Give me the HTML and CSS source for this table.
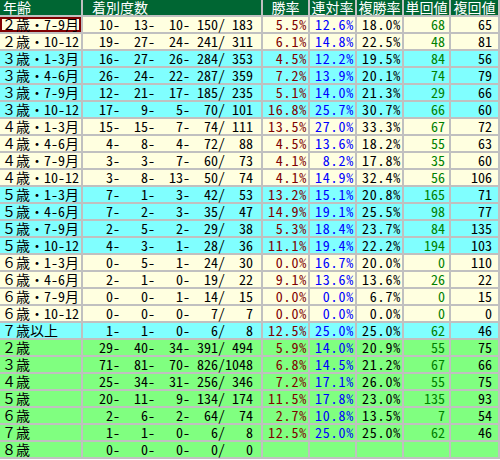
FILE: index.html
```html
<!DOCTYPE html>
<html lang="ja">
<head>
<meta charset="utf-8">
<title>年齢別成績</title>
<link rel="stylesheet" href="styles.css">
</head>
<body>
<div class="tbl">
  <div class="row head">
    <div class="lbl">年齢</div><div class="rec">着別度数</div><div>勝率</div><div>連対率</div><div>複勝率</div><div>単回値</div><div>複回値</div>
  </div>
  <div class="row y">
    <div class="lbl sel">２歳・7-9月</div><div class="rec"><span>10-</span><span>13-</span><span>10-</span><span>150/</span><span class="t">183</span></div><div class="w">5.5%</div><div class="r">12.6%</div><div class="p">18.0%</div><div class="tn">68</div><div class="fk">65</div>
  </div>
  <div class="row y">
    <div class="lbl">２歳・10-12</div><div class="rec"><span>19-</span><span>27-</span><span>24-</span><span>241/</span><span class="t">311</span></div><div class="w">6.1%</div><div class="r">14.8%</div><div class="p">22.5%</div><div class="tn">48</div><div class="fk">81</div>
  </div>
  <div class="row c">
    <div class="lbl">３歳・1-3月</div><div class="rec"><span>16-</span><span>27-</span><span>26-</span><span>284/</span><span class="t">353</span></div><div class="w">4.5%</div><div class="r">12.2%</div><div class="p">19.5%</div><div class="tn">84</div><div class="fk">56</div>
  </div>
  <div class="row c">
    <div class="lbl">３歳・4-6月</div><div class="rec"><span>26-</span><span>24-</span><span>22-</span><span>287/</span><span class="t">359</span></div><div class="w">7.2%</div><div class="r">13.9%</div><div class="p">20.1%</div><div class="tn">74</div><div class="fk">79</div>
  </div>
  <div class="row c">
    <div class="lbl">３歳・7-9月</div><div class="rec"><span>12-</span><span>21-</span><span>17-</span><span>185/</span><span class="t">235</span></div><div class="w">5.1%</div><div class="r">14.0%</div><div class="p">21.3%</div><div class="tn">29</div><div class="fk">66</div>
  </div>
  <div class="row c">
    <div class="lbl">３歳・10-12</div><div class="rec"><span>17-</span><span>9-</span><span>5-</span><span>70/</span><span class="t">101</span></div><div class="w">16.8%</div><div class="r">25.7%</div><div class="p">30.7%</div><div class="tn">66</div><div class="fk">60</div>
  </div>
  <div class="row y">
    <div class="lbl">４歳・1-3月</div><div class="rec"><span>15-</span><span>15-</span><span>7-</span><span>74/</span><span class="t">111</span></div><div class="w">13.5%</div><div class="r">27.0%</div><div class="p">33.3%</div><div class="tn">67</div><div class="fk">72</div>
  </div>
  <div class="row y">
    <div class="lbl">４歳・4-6月</div><div class="rec"><span>4-</span><span>8-</span><span>4-</span><span>72/</span><span class="t">88</span></div><div class="w">4.5%</div><div class="r">13.6%</div><div class="p">18.2%</div><div class="tn">55</div><div class="fk">63</div>
  </div>
  <div class="row y">
    <div class="lbl">４歳・7-9月</div><div class="rec"><span>3-</span><span>3-</span><span>7-</span><span>60/</span><span class="t">73</span></div><div class="w">4.1%</div><div class="r">8.2%</div><div class="p">17.8%</div><div class="tn">35</div><div class="fk">60</div>
  </div>
  <div class="row y">
    <div class="lbl">４歳・10-12</div><div class="rec"><span>3-</span><span>8-</span><span>13-</span><span>50/</span><span class="t">74</span></div><div class="w">4.1%</div><div class="r">14.9%</div><div class="p">32.4%</div><div class="tn">56</div><div class="fk">106</div>
  </div>
  <div class="row c">
    <div class="lbl">５歳・1-3月</div><div class="rec"><span>7-</span><span>1-</span><span>3-</span><span>42/</span><span class="t">53</span></div><div class="w">13.2%</div><div class="r">15.1%</div><div class="p">20.8%</div><div class="tn">165</div><div class="fk">71</div>
  </div>
  <div class="row c">
    <div class="lbl">５歳・4-6月</div><div class="rec"><span>7-</span><span>2-</span><span>3-</span><span>35/</span><span class="t">47</span></div><div class="w">14.9%</div><div class="r">19.1%</div><div class="p">25.5%</div><div class="tn">98</div><div class="fk">77</div>
  </div>
  <div class="row c">
    <div class="lbl">５歳・7-9月</div><div class="rec"><span>2-</span><span>5-</span><span>2-</span><span>29/</span><span class="t">38</span></div><div class="w">5.3%</div><div class="r">18.4%</div><div class="p">23.7%</div><div class="tn">84</div><div class="fk">135</div>
  </div>
  <div class="row c">
    <div class="lbl">５歳・10-12</div><div class="rec"><span>4-</span><span>3-</span><span>1-</span><span>28/</span><span class="t">36</span></div><div class="w">11.1%</div><div class="r">19.4%</div><div class="p">22.2%</div><div class="tn">194</div><div class="fk">103</div>
  </div>
  <div class="row y">
    <div class="lbl">６歳・1-3月</div><div class="rec"><span>0-</span><span>5-</span><span>1-</span><span>24/</span><span class="t">30</span></div><div class="w">0.0%</div><div class="r">16.7%</div><div class="p">20.0%</div><div class="tn">0</div><div class="fk">110</div>
  </div>
  <div class="row y">
    <div class="lbl">６歳・4-6月</div><div class="rec"><span>2-</span><span>1-</span><span>0-</span><span>19/</span><span class="t">22</span></div><div class="w">9.1%</div><div class="r">13.6%</div><div class="p">13.6%</div><div class="tn">26</div><div class="fk">22</div>
  </div>
  <div class="row y">
    <div class="lbl">６歳・7-9月</div><div class="rec"><span>0-</span><span>0-</span><span>1-</span><span>14/</span><span class="t">15</span></div><div class="w">0.0%</div><div class="r">0.0%</div><div class="p">6.7%</div><div class="tn">0</div><div class="fk">15</div>
  </div>
  <div class="row y">
    <div class="lbl">６歳・10-12</div><div class="rec"><span>0-</span><span>0-</span><span>0-</span><span>7/</span><span class="t">7</span></div><div class="w">0.0%</div><div class="r">0.0%</div><div class="p">0.0%</div><div class="tn">0</div><div class="fk">0</div>
  </div>
  <div class="row c">
    <div class="lbl">７歳以上</div><div class="rec"><span>1-</span><span>1-</span><span>0-</span><span>6/</span><span class="t">8</span></div><div class="w">12.5%</div><div class="r">25.0%</div><div class="p">25.0%</div><div class="tn">62</div><div class="fk">46</div>
  </div>
  <div class="row g">
    <div class="lbl">２歳</div><div class="rec"><span>29-</span><span>40-</span><span>34-</span><span>391/</span><span class="t">494</span></div><div class="w">5.9%</div><div class="r">14.0%</div><div class="p">20.9%</div><div class="tn">55</div><div class="fk">75</div>
  </div>
  <div class="row g">
    <div class="lbl">３歳</div><div class="rec"><span>71-</span><span>81-</span><span>70-</span><span>826/</span><span class="t">1048</span></div><div class="w">6.8%</div><div class="r">14.5%</div><div class="p">21.2%</div><div class="tn">67</div><div class="fk">66</div>
  </div>
  <div class="row g">
    <div class="lbl">４歳</div><div class="rec"><span>25-</span><span>34-</span><span>31-</span><span>256/</span><span class="t">346</span></div><div class="w">7.2%</div><div class="r">17.1%</div><div class="p">26.0%</div><div class="tn">55</div><div class="fk">75</div>
  </div>
  <div class="row g">
    <div class="lbl">５歳</div><div class="rec"><span>20-</span><span>11-</span><span>9-</span><span>134/</span><span class="t">174</span></div><div class="w">11.5%</div><div class="r">17.8%</div><div class="p">23.0%</div><div class="tn">135</div><div class="fk">93</div>
  </div>
  <div class="row g">
    <div class="lbl">６歳</div><div class="rec"><span>2-</span><span>6-</span><span>2-</span><span>64/</span><span class="t">74</span></div><div class="w">2.7%</div><div class="r">10.8%</div><div class="p">13.5%</div><div class="tn">7</div><div class="fk">54</div>
  </div>
  <div class="row g">
    <div class="lbl">７歳</div><div class="rec"><span>1-</span><span>1-</span><span>0-</span><span>6/</span><span class="t">8</span></div><div class="w">12.5%</div><div class="r">25.0%</div><div class="p">25.0%</div><div class="tn">62</div><div class="fk">46</div>
  </div>
  <div class="row g">
    <div class="lbl">８歳</div><div class="rec"><span>0-</span><span>0-</span><span>0-</span><span>0/</span><span class="t">0</span></div><div class="w"></div><div class="r"></div><div class="p"></div><div class="tn"></div><div class="fk"></div>
  </div>
</div>
</body>
</html>
```
FILE: styles.css
```css
html, body {
  margin: 0;
  padding: 0;
  background: #ffffff;
}

body {
  width: 500px;
  height: 460px;
  overflow: hidden;
}

.tbl {
  display: flex;
  flex-direction: column;
  gap: 2px;
  width: 500px;
  box-sizing: border-box;
  padding: 0 2px 2px 0;
  background: #c0c0c0;
  font-family: "Noto Sans Mono CJK JP", "Noto Sans CJK JP", monospace;
  font-size: 14px;
  color: #000000;
}

.row {
  display: grid;
  grid-template-columns: 81px 178px 45px 45px 45px 45px 47px;
  column-gap: 2px;
  height: 15px;
}

.row > div {
  height: 15px;
  line-height: 15px;
  white-space: pre;
  text-align: right;
  padding-right: 2px;
}

.row > .lbl {
  text-align: left;
  padding: 0 0 0 2px;
}

.row > .sel {
  box-shadow: inset 0 0 0 2px #800000;
}

.row > .rec {
  padding-right: 8px;
}

.rec span {
  display: inline-block;
  width: 35px;
  text-align: right;
}

.rec span.t {
  width: 28px;
}

.w, .r, .p {
  letter-spacing: 0.8px;
}

.row > .w, .row > .r, .row > .p {
  padding-right: 1px;
}

.row > .tn {
  padding-right: 4px;
}

.row > .fk {
  padding-right: 6px;
}

.head > div {
  background: #006633;
  color: #ffffff;
  text-align: center;
  padding: 0;
}

.row.head > div {
  padding: 0;
  letter-spacing: 0;
}

.row.head > .lbl {
  text-align: left;
  padding-left: 3px;
}

.row.head > .rec {
  text-align: left;
  padding-left: 9px;
}

.y > div { background: #ffffe0; }
.c > div { background: #80ffff; }
.g > div { background: #80ff80; }

.w { color: #800000; }
.r { color: #0000ff; }
.p { color: #000000; }
.tn { color: #008000; }
.fk { color: #000000; }
```
